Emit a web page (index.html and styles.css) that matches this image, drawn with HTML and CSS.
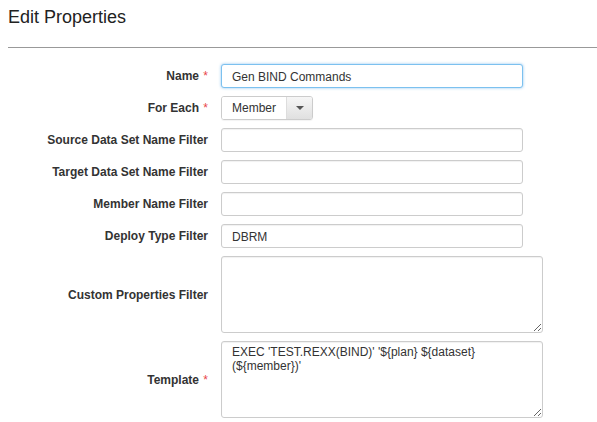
FILE: index.html
```html
<!DOCTYPE html>
<html>
<head>
<meta charset="utf-8">
<link rel="stylesheet" href="styles.css">
</head>
<body>
<h1 class="title">Edit Properties</h1>
<hr class="divider">
<form class="form">
  <label class="label" for="f-name">Name <span class="req">*</span></label>
  <div class="field"><input id="f-name" class="input input-focus" type="text" value="Gen BIND Commands"></div>

  <label class="label">For Each <span class="req">*</span></label>
  <div class="field">
    <div class="select">
      <span class="select-text">Member</span>
      <span class="select-btn"><span class="caret"></span></span>
    </div>
  </div>

  <label class="label" for="f-src">Source Data Set Name Filter</label>
  <div class="field"><input id="f-src" class="input" type="text"></div>

  <label class="label" for="f-tgt">Target Data Set Name Filter</label>
  <div class="field"><input id="f-tgt" class="input" type="text"></div>

  <label class="label" for="f-mem">Member Name Filter</label>
  <div class="field"><input id="f-mem" class="input" type="text"></div>

  <label class="label" for="f-dep">Deploy Type Filter</label>
  <div class="field"><input id="f-dep" class="input" type="text" value="DBRM"></div>

  <label class="label" for="f-cus">Custom Properties Filter</label>
  <div class="field"><textarea id="f-cus" class="textarea"></textarea></div>

  <label class="label" for="f-tpl">Template <span class="req">*</span></label>
  <div class="field"><textarea id="f-tpl" class="textarea">EXEC 'TEST.REXX(BIND)' '${plan} ${dataset} (${member})'</textarea></div>
</form>
</body>
</html>
```
FILE: styles.css
```css
html, body {
  margin: 0;
  padding: 0;
  background: #fff;
}
body {
  padding: 7px 0 0 8px;
  font-family: "Liberation Sans", Arial, sans-serif;
  color: #333;
  overflow: hidden;
}
.title {
  margin: 0;
  font-size: 18px;
  line-height: 20px;
  font-weight: normal;
  color: #222;
}
.divider {
  margin: 20px 0 0 0;
  border: 0;
  border-top: 1px solid #999;
  height: 0;
}
.form {
  display: grid;
  grid-template-columns: 200px 322px;
  column-gap: 13px;
  row-gap: 8px;
  margin-top: 16px;
  align-items: center;
}
.label {
  text-align: right;
  font-size: 12px;
  font-weight: bold;
  color: #333;
  line-height: 14px;
}
.req {
  color: #e8454a;
  font-weight: normal;
  margin-left: 1px;
}
.field {
  display: flex;
}
.input {
  box-sizing: border-box;
  width: 302px;
  height: 24px;
  margin: 0;
  padding: 1px 10px 0;
  border: 1px solid #ccc;
  border-radius: 3px;
  box-shadow: inset 0 1px 1px rgba(0,0,0,0.06);
  font-family: "Liberation Sans", Arial, sans-serif;
  font-size: 12px;
  color: #333;
  outline: none;
}
.input-focus {
  border-color: #7cc1ef;
  box-shadow: 0 0 3px rgba(102,175,233,0.75);
}
.select {
  box-sizing: border-box;
  width: 92px;
  height: 24px;
  display: flex;
  border: 1px solid #ccc;
  border-radius: 3px;
  overflow: hidden;
  box-shadow: 0 1px 1px rgba(0,0,0,0.05);
}
.select-text {
  flex: 1;
  padding-left: 10px;
  font-size: 12px;
  line-height: 22px;
  color: #333;
  background: #fff;
}
.select-btn {
  width: 25px;
  display: flex;
  align-items: center;
  justify-content: center;
  border-left: 1px solid #ddd;
  background: linear-gradient(#f6f6f6, #e0e0e0);
}
.caret {
  width: 0;
  height: 0;
  border-left: 4px solid transparent;
  border-right: 4px solid transparent;
  border-top: 4px solid #555;
}
.textarea {
  box-sizing: border-box;
  width: 322px;
  height: 77px;
  margin: 0;
  padding: 3px 10px;
  border: 1px solid #ccc;
  border-radius: 3px;
  box-shadow: inset 0 1px 1px rgba(0,0,0,0.06);
  font-family: "Liberation Sans", Arial, sans-serif;
  font-size: 12px;
  line-height: 14px;
  color: #333;
  outline: none;
  resize: both;
  overflow: hidden;
}
```
